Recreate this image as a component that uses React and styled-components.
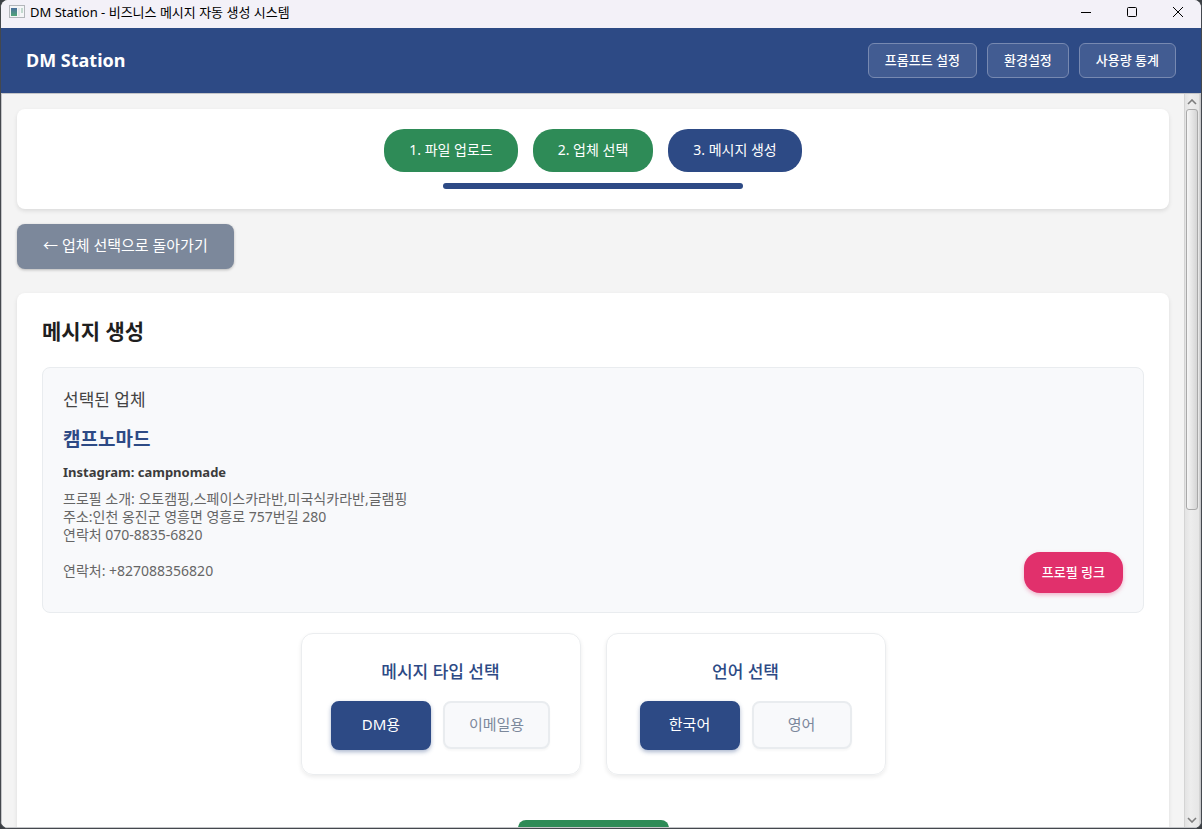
import React from "react";
import styled, { createGlobalStyle, css } from "styled-components";

const Global = createGlobalStyle`
  *, *::before, *::after { box-sizing: border-box; }
  body {
    margin: 0;
    background: #3c4045;
    font-family: "Noto Sans", "Noto Sans CJK KR", sans-serif;
    color: #1f1f1f;
  }
  h1, h2, h3, h4, p { margin: 0; }
  button, a { font-family: inherit; cursor: pointer; }
`;

const navy = "#2d4a85";
const green = "#2e8b57";

const Window = styled.div`
  height: 100vh;
  display: flex;
  flex-direction: column;
  border: solid #44484e;
  border-width: 0 1px 1px 1px;
  border-radius: 8px;
  overflow: hidden;
  background: #f4f4f4;
`;

const TitleBar = styled.div`
  height: 28px;
  flex: none;
  display: flex;
  align-items: center;
  justify-content: space-between;
  padding: 0 15px 4px 7px;
  background: #f3f1f8;
`;

const WindowTitle = styled.div`
  display: flex;
  align-items: center;
  gap: 5px;
  font-size: 13px;
  line-height: 20px;
  color: #000;
`;

const WindowControls = styled.div`
  display: flex;
  gap: 30px;
`;

const ControlButton = styled.button`
  display: flex;
  padding: 0;
  border: 0;
  background: none;
  color: #000;
`;

const Header = styled.header`
  height: 65px;
  flex: none;
  display: flex;
  align-items: center;
  justify-content: space-between;
  padding: 0 25px;
  background: ${navy};
`;

const Brand = styled.h1`
  padding-bottom: 2px;
  font-size: 18px;
  line-height: 24px;
  font-weight: 700;
  color: #fff;
`;

const HeaderNav = styled.nav`
  display: flex;
  gap: 10px;
`;

const HeaderButton = styled.button`
  height: 35px;
  padding: 0 16px 2px;
  border: 1px solid #7789b1;
  border-radius: 6px;
  background: #425c92;
  color: #fff;
  font-size: 13px;
  line-height: 16px;
  font-weight: 500;
`;

const Viewport = styled.div`
  flex: 1;
  min-height: 0;
  display: flex;
  border: 1px solid #c4c5c8;
`;

const Content = styled.main`
  flex: 1;
  min-width: 0;
  overflow: hidden;
  padding: 15px;
  display: flex;
  flex-direction: column;
`;

const Card = styled.section`
  flex: none;
  background: #fff;
  border-radius: 8px;
  box-shadow: 0 2px 4px rgba(0, 0, 0, 0.1);
`;

const StepCard = styled(Card)`
  display: flex;
  flex-direction: column;
  align-items: center;
  gap: 11px;
  padding: 20px;
`;

const Steps = styled.div`
  display: flex;
  gap: 15px;
`;

const Step = styled.button`
  height: 43px;
  min-width: 120px;
  padding: 0 25px 2px;
  border: 0;
  border-radius: 20px;
  background: ${(p) => (p.$current ? navy : green)};
  color: #fff;
  font-size: 14px;
  line-height: 18px;
`;

const Progress = styled.div`
  width: 300px;
  height: 6px;
  border-radius: 3px;
  background: ${navy};
`;

const BackButton = styled.button`
  align-self: flex-start;
  flex: none;
  height: 45px;
  margin: 15px 0 24px;
  padding: 0 26px 4px;
  border: 0;
  border-radius: 8px;
  background: #7c889b;
  color: #fff;
  font-size: 15px;
  line-height: 20px;
  box-shadow: 0 1px 3px rgba(0, 0, 0, 0.25);
`;

const MessageCard = styled(Card)`
  display: flex;
  flex-direction: column;
  padding: 25px;
`;

const CardTitle = styled.h2`
  margin-bottom: 23px;
  font-size: 21px;
  line-height: 26px;
  font-weight: 700;
`;

const CompanyBox = styled.div`
  display: flex;
  align-items: flex-end;
  justify-content: space-between;
  padding: 20px 20px 19px;
  border: 1px solid #e9ecef;
  border-radius: 8px;
  background: #f8f9fb;
`;

const CompanyInfo = styled.div`
  padding-bottom: 13px;
`;

const BoxLabel = styled.h3`
  font-size: 17px;
  line-height: 24px;
  font-weight: 400;
  color: #444;
`;

const CompanyName = styled.h4`
  margin: 14px 0 8px;
  font-size: 19px;
  line-height: 26px;
  font-weight: 700;
  color: ${navy};
`;

const Handle = styled.p`
  font-size: 13px;
  line-height: 24px;
  font-weight: 700;
  color: #3c3c3c;
`;

const Description = styled.p`
  margin-top: 6px;
  font-size: 14px;
  line-height: 18px;
  color: #666;
  white-space: pre-line;
`;

const ProfileLink = styled.a`
  display: flex;
  align-items: center;
  height: 41px;
  padding: 0 18px 2px;
  border-radius: 16px;
  background: #e1306c;
  color: #fff;
  font-size: 13px;
  line-height: 16px;
  font-weight: 500;
  text-decoration: none;
  box-shadow: 0 2px 4px rgba(225, 48, 108, 0.35);
`;

const OptionRow = styled.div`
  display: flex;
  justify-content: center;
  gap: 25px;
  margin-top: 20px;
`;

const OptionCard = styled.div`
  width: 280px;
  height: 142px;
  display: flex;
  flex-direction: column;
  align-items: center;
  gap: 17px;
  padding: 25px 0;
  border: 1px solid #ebedef;
  border-radius: 12px;
  box-shadow: 0 2px 4px rgba(0, 0, 0, 0.08);
`;

const OptionTitle = styled.h3`
  font-size: 17px;
  line-height: 25px;
  font-weight: 500;
  color: ${navy};
`;

const OptionButtons = styled.div`
  display: flex;
  gap: 12px;
`;

const OptionButton = styled.button`
  min-width: 100px;
  height: 48px;
  padding: 0 24px 2px;
  border: 2px solid #e9ecef;
  border-radius: 8px;
  background: #f8f9fb;
  color: #7c889b;
  font-size: 15px;
  line-height: 20px;
  box-shadow: 0 2px 2px rgba(0, 0, 0, 0.03);
  ${(p) =>
    p.$selected &&
    css`
      height: 49px;
      padding-bottom: 4px;
      border-color: ${navy};
      background: ${navy};
      color: #fff;
      box-shadow: 0 2px 4px rgba(45, 74, 133, 0.4);
    `}
`;

const GenerateButton = styled.button`
  align-self: center;
  width: 151px;
  height: 48px;
  margin-top: 45px;
  border: 0;
  border-radius: 8px;
  background: ${green};
`;

const Scrollbar = styled.div`
  flex: none;
  width: 16px;
  display: flex;
  flex-direction: column;
  align-items: center;
  border: solid #d4d4d4;
  border-width: 0 1px;
  background: linear-gradient(90deg, #e3e3e3, #ededed 40%, #e6e6e6);
`;

const ScrollArrow = styled.button`
  flex: none;
  width: 14px;
  height: 15px;
  display: flex;
  align-items: center;
  justify-content: center;
  padding: 0;
  border: 0;
  background: none;
`;

const ScrollTrack = styled.div`
  flex: 1;
  width: 12px;
`;

const ScrollThumb = styled.div`
  height: 57%;
  border: 1px solid #a9a9a9;
  border-radius: 3px;
  background: linear-gradient(90deg, #f6f6f6, #e6e6e6 50%, #d4d4d4);
`;

const AppIcon = () => (
  <svg width="17" height="14" viewBox="0 0 17 14" aria-hidden="true">
    <defs>
      <linearGradient id="pane" x1="0" y1="0" x2="0" y2="1">
        <stop offset="0" stopColor="#4b6f9d" />
        <stop offset="1" stopColor="#4fa577" />
      </linearGradient>
    </defs>
    <rect x="1.5" y="0.5" width="15" height="12" fill="#f5f6f8" stroke="#b3b6bb" />
    <rect x="3" y="3" width="6" height="8" fill="url(#pane)" />
    <rect x="10" y="3" width="2" height="8" fill="#e4e7ea" />
    <rect x="13" y="3" width="2" height="5" fill="#c3d9cf" />
  </svg>
);

const Glyph = ({ d }) => (
  <svg width="16" height="16" viewBox="0 0 16 16" fill="none" stroke="currentColor" aria-hidden="true">
    <path d={d} />
  </svg>
);

const Chevron = ({ d }) => (
  <svg width="10" height="6" viewBox="0 0 10 6" fill="none" stroke="#7d7d7d" strokeWidth="1.6" aria-hidden="true">
    <path d={d} />
  </svg>
);

const steps = ["1. 파일 업로드", "2. 업체 선택", "3. 메시지 생성"];

const optionGroups = [
  { title: "메시지 타입 선택", options: ["DM용", "이메일용"] },
  { title: "언어 선택", options: ["한국어", "영어"] },
];

const description = `프로필 소개: 오토캠핑,스페이스카라반,미국식카라반,글램핑
주소:인천 옹진군 영흥면 영흥로 757번길 280
연락처 070-8835-6820

연락처: +827088356820`;

export default function App() {
  return (
    <>
      <Global />
      <Window>
        <TitleBar>
          <WindowTitle>
            <AppIcon />
            <span>DM Station - 비즈니스 메시지 자동 생성 시스템</span>
          </WindowTitle>
          <WindowControls>
            <ControlButton aria-label="최소화">
              <Glyph d="M3 8.5h10" />
            </ControlButton>
            <ControlButton aria-label="최대화">
              <Glyph d="M4.5 3.5h7a1 1 0 0 1 1 1v7a1 1 0 0 1-1 1h-7a1 1 0 0 1-1-1v-7a1 1 0 0 1 1-1z" />
            </ControlButton>
            <ControlButton aria-label="닫기">
              <Glyph d="M3 3l10 10M13 3L3 13" />
            </ControlButton>
          </WindowControls>
        </TitleBar>
        <Header>
          <Brand>DM Station</Brand>
          <HeaderNav>
            <HeaderButton>프롬프트 설정</HeaderButton>
            <HeaderButton>환경설정</HeaderButton>
            <HeaderButton>사용량 통계</HeaderButton>
          </HeaderNav>
        </Header>
        <Viewport>
          <Content>
            <StepCard>
              <Steps>
                {steps.map((label, i) => (
                  <Step key={label} $current={i === 2}>
                    {label}
                  </Step>
                ))}
              </Steps>
              <Progress />
            </StepCard>
            <BackButton>← 업체 선택으로 돌아가기</BackButton>
            <MessageCard>
              <CardTitle>메시지 생성</CardTitle>
              <CompanyBox>
                <CompanyInfo>
                  <BoxLabel>선택된 업체</BoxLabel>
                  <CompanyName>캠프노마드</CompanyName>
                  <Handle>Instagram: campnomade</Handle>
                  <Description>{description}</Description>
                </CompanyInfo>
                <ProfileLink href="#profile">프로필 링크</ProfileLink>
              </CompanyBox>
              <OptionRow>
                {optionGroups.map((group) => (
                  <OptionCard key={group.title}>
                    <OptionTitle>{group.title}</OptionTitle>
                    <OptionButtons>
                      {group.options.map((option, i) => (
                        <OptionButton key={option} $selected={i === 0} aria-pressed={i === 0}>
                          {option}
                        </OptionButton>
                      ))}
                    </OptionButtons>
                  </OptionCard>
                ))}
              </OptionRow>
              <GenerateButton aria-label="메시지 생성" />
            </MessageCard>
          </Content>
          <Scrollbar>
            <ScrollArrow aria-label="위로">
              <Chevron d="M1 5l4-4 4 4" />
            </ScrollArrow>
            <ScrollTrack>
              <ScrollThumb />
            </ScrollTrack>
            <ScrollArrow aria-label="아래로">
              <Chevron d="M1 1l4 4 4-4" />
            </ScrollArrow>
          </Scrollbar>
        </Viewport>
      </Window>
    </>
  );
}
